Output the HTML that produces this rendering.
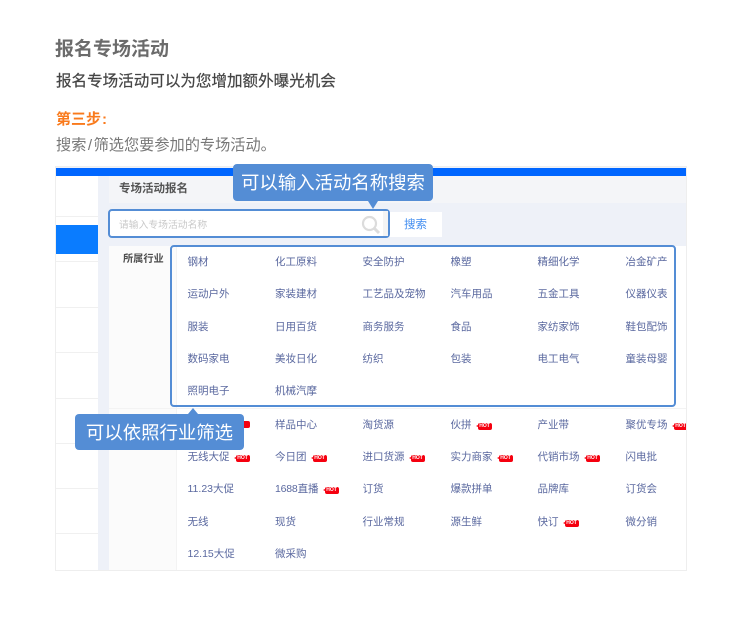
<!DOCTYPE html>
<html lang="zh">
<head>
<meta charset="utf-8">
<style>
html,body{margin:0;padding:0;background:#fff;}
body{width:730px;height:620px;position:relative;overflow:hidden;font-family:"Liberation Sans","Noto Sans CJK SC",sans-serif;}
.a{position:absolute;}
.t{position:absolute;white-space:nowrap;}
.i{position:absolute;white-space:nowrap;font-size:10.5px;line-height:14px;color:#5a689f;margin-top:1px;}
.h{position:relative;display:inline-block;width:14px;height:7px;line-height:7px;background:#f5000f;color:#fff;font-size:5px;font-weight:bold;text-align:center;border-radius:2px;margin-left:6px;margin-top:5px;vertical-align:top;letter-spacing:0;}
.h::before{content:"";position:absolute;left:-2px;top:2px;border-right:2px solid #f5000f;border-top:1.5px solid transparent;border-bottom:1.5px solid transparent;}
.tip{position:absolute;background:#548dd5;color:#fff;border-radius:4px;font-size:18.4px;text-align:center;white-space:nowrap;}
</style>
</head>
<body>
<div class="t" style="left:55px;top:37px;font-size:19px;line-height:25px;font-weight:bold;color:#6b6b6b;">报名专场活动</div>
<div class="t" style="left:56px;top:72px;font-size:15.55px;line-height:20px;color:#444;-webkit-text-stroke:0.2px #444;">报名专场活动可以为您增加额外曝光机会</div>
<div class="t" style="left:56px;top:110px;font-size:15px;line-height:20px;font-weight:bold;color:#f97a1c;">第三步<span style="margin-left:1px;">:</span></div>
<div class="t" style="left:56px;top:136px;font-size:15.2px;line-height:20px;color:#777;">搜索<span style="margin:0 1.5px;">/</span>筛选您要参加的专场活动。</div>

<div class="a" style="left:56px;top:167px;width:630px;height:403px;background:#eef1f8;box-shadow:0 0 0 1px #eeeeee;"></div>
<div class="a" style="left:56px;top:168px;width:630px;height:8px;background:#0066ff;"></div>
<div class="a" style="left:56px;top:176px;width:42px;height:394px;background:#fff;"></div>
<div class="a" style="left:56px;top:216px;width:42px;height:1px;background:#f0f0f0;"></div>
<div class="a" style="left:56px;top:225px;width:42px;height:29px;background:#0a7cff;"></div>
<div class="a" style="left:56px;top:261px;width:42px;height:1px;background:#f0f0f0;"></div>
<div class="a" style="left:56px;top:307px;width:42px;height:1px;background:#f0f0f0;"></div>
<div class="a" style="left:56px;top:352px;width:42px;height:1px;background:#f0f0f0;"></div>
<div class="a" style="left:56px;top:398px;width:42px;height:1px;background:#f0f0f0;"></div>
<div class="a" style="left:56px;top:443px;width:42px;height:1px;background:#f0f0f0;"></div>
<div class="a" style="left:56px;top:488px;width:42px;height:1px;background:#f0f0f0;"></div>
<div class="a" style="left:56px;top:533px;width:42px;height:1px;background:#f0f0f0;"></div>

<div class="a" style="left:109px;top:176px;width:577px;height:27px;background:#f4f5f8;"></div>
<div class="t" style="left:119px;top:181px;font-size:11.5px;line-height:16px;font-weight:bold;color:#555;">专场活动报名</div>

<div class="a" style="left:108px;top:209px;width:278px;height:25px;background:#fff;border:2px solid #548dd5;border-radius:4px;"></div>
<div class="a" style="left:383px;top:211px;width:5px;height:25px;background:#f4f4f4;"></div>
<div class="t" style="left:119px;top:219px;font-size:9.8px;line-height:14px;color:#c8c8c8;">请输入专场活动名称</div>
<svg class="a" style="left:360px;top:214px;" width="22" height="22" viewBox="0 0 22 22"><circle cx="9.5" cy="9.5" r="6.5" fill="none" stroke="#dcdcdc" stroke-width="2.2"/><path d="M14.5 14.5L19 19" stroke="#dcdcdc" stroke-width="3" fill="none"/></svg>
<div class="a" style="left:390px;top:212px;width:52px;height:25px;background:#fff;"></div>
<div class="t" style="left:404px;top:217px;font-size:11.5px;line-height:16px;color:#3f8cf0;">搜索</div>

<div class="a" style="left:109px;top:246px;width:67px;height:324px;background:#fbfbfb;"></div>
<div class="a" style="left:176px;top:246px;width:510px;height:324px;background:#fff;"></div>
<div class="a" style="left:176px;top:246px;width:1px;height:324px;background:#f3f3f3;"></div>
<div class="a" style="left:109px;top:408px;width:577px;height:1px;background:#f3f3f3;"></div>
<div class="t" style="left:123px;top:252px;font-size:10.2px;line-height:15px;font-weight:bold;color:#4d4d4d;">所属行业</div>

<div class="a" style="left:170px;top:245px;width:502px;height:158px;border:2px solid #548dd5;border-radius:4px;"></div>

<div class="i" style="left:187.5px;top:254px">钢材</div><div class="i" style="left:275px;top:254px">化工原料</div><div class="i" style="left:362.5px;top:254px">安全防护</div><div class="i" style="left:450.5px;top:254px">橡塑</div><div class="i" style="left:537.5px;top:254px">精细化学</div><div class="i" style="left:625.5px;top:254px">冶金矿产</div>
<div class="i" style="left:187.5px;top:286px">运动户外</div><div class="i" style="left:275px;top:286px">家装建材</div><div class="i" style="left:362.5px;top:286px">工艺品及宠物</div><div class="i" style="left:450.5px;top:286px">汽车用品</div><div class="i" style="left:537.5px;top:286px">五金工具</div><div class="i" style="left:625.5px;top:286px">仪器仪表</div>
<div class="i" style="left:187.5px;top:319px">服装</div><div class="i" style="left:275px;top:319px">日用百货</div><div class="i" style="left:362.5px;top:319px">商务服务</div><div class="i" style="left:450.5px;top:319px">食品</div><div class="i" style="left:537.5px;top:319px">家纺家饰</div><div class="i" style="left:625.5px;top:319px">鞋包配饰</div>
<div class="i" style="left:187.5px;top:351px">数码家电</div><div class="i" style="left:275px;top:351px">美妆日化</div><div class="i" style="left:362.5px;top:351px">纺织</div><div class="i" style="left:450.5px;top:351px">包装</div><div class="i" style="left:537.5px;top:351px">电工电气</div><div class="i" style="left:625.5px;top:351px">童装母婴</div>
<div class="i" style="left:187.5px;top:383px">照明电子</div><div class="i" style="left:275px;top:383px">机械汽摩</div>

<div class="i" style="left:275px;top:417px">样品中心</div><div class="i" style="left:362.5px;top:417px">淘货源</div><div class="i" style="left:450.5px;top:417px">伙拼<span class="h">HOT</span></div><div class="i" style="left:537.5px;top:417px">产业带</div><div class="i" style="left:625.5px;top:417px;width:60px;overflow:hidden">聚优专场<span class="h">HOT</span></div>
<div class="a" style="left:234px;top:421px;width:16px;height:7px;background:#f5000f;border-radius:2px;"></div>
<div class="i" style="left:187.5px;top:449px">无线大促<span class="h">HOT</span></div><div class="i" style="left:275px;top:449px">今日团<span class="h">HOT</span></div><div class="i" style="left:362.5px;top:449px">进口货源<span class="h">HOT</span></div><div class="i" style="left:450.5px;top:449px">实力商家<span class="h">HOT</span></div><div class="i" style="left:537.5px;top:449px">代销市场<span class="h">HOT</span></div><div class="i" style="left:625.5px;top:449px">闪电批</div>
<div class="i" style="left:187.5px;top:481px">11.23大促</div><div class="i" style="left:275px;top:481px"><span style="letter-spacing:-0.2px">1688</span>直播<span class="h">HOT</span></div><div class="i" style="left:362.5px;top:481px">订货</div><div class="i" style="left:450.5px;top:481px">爆款拼单</div><div class="i" style="left:537.5px;top:481px">品牌库</div><div class="i" style="left:625.5px;top:481px">订货会</div>
<div class="i" style="left:187.5px;top:514px">无线</div><div class="i" style="left:275px;top:514px">现货</div><div class="i" style="left:362.5px;top:514px">行业常规</div><div class="i" style="left:450.5px;top:514px">源生鲜</div><div class="i" style="left:537.5px;top:514px">快订<span class="h">HOT</span></div><div class="i" style="left:625.5px;top:514px">微分销</div>
<div class="i" style="left:187.5px;top:546px">12.15大促</div><div class="i" style="left:275px;top:546px">微采购</div>

<div class="tip" style="left:233px;top:164px;width:200px;height:37px;line-height:38px;">可以输入活动名称搜索</div>
<div class="a" style="left:368px;top:201px;width:0;height:0;border-left:5px solid transparent;border-right:5px solid transparent;border-top:8px solid #548dd5;"></div>
<div class="tip" style="left:75px;top:414px;width:169px;height:36px;line-height:38px;">可以依照行业筛选</div>
<div class="a" style="left:188px;top:408px;width:0;height:0;border-left:5px solid transparent;border-right:5px solid transparent;border-bottom:6px solid #548dd5;"></div>
</body>
</html>
